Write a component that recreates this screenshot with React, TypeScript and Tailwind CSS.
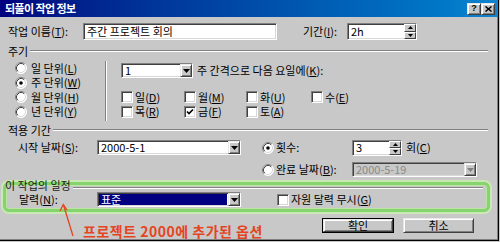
import React from "react";

const sunken =
  "border border-t-[#808080] border-l-[#808080] border-b-white border-r-white shadow-[inset_1px_1px_0_#404040,inset_-1px_-1px_0_#d8d8d8]";
const raised =
  "bg-[#c8c8c8] border border-t-[#e8e8e8] border-l-[#e8e8e8] border-b-[#404040] border-r-[#404040] shadow-[inset_1px_1px_0_#ffffff,inset_-1px_-1px_0_#808080]";
const raisedThin =
  "bg-[#c8c8c8] border border-t-white border-l-white border-b-[#404040] border-r-[#404040]";

function Arrow({ color = "#000" }: { color?: string }) {
  return (
    <svg width="7" height="4" viewBox="0 0 7 4">
      <path d="M0 0H7L3.5 4Z" fill={color} />
    </svg>
  );
}

function Tri({ up = false }: { up?: boolean }) {
  return (
    <svg width="5" height="3" viewBox="0 0 5 3">
      <path d={up ? "M0 3H5L2.5 0Z" : "M0 0H5L2.5 3Z"} fill="#000" />
    </svg>
  );
}

function Combo({
  value,
  className = "",
  selected = false,
  disabled = false,
}: {
  value: string;
  className?: string;
  selected?: boolean;
  disabled?: boolean;
}) {
  return (
    <div className={`h-[15px] flex ${sunken} ${disabled ? "bg-[#c8c8c8]" : "bg-white"} ${className}`}>
      <div className="flex-1 flex items-center p-[1px] min-w-0">
        {selected ? (
          <div className="w-full h-full bg-[#000080] text-white flex items-center pl-[2px]">{value}</div>
        ) : (
          <span className={`pl-[2px] ${disabled ? "text-[#8a8a8a]" : ""}`}>{value}</span>
        )}
      </div>
      <div className={`w-[12px] h-full flex items-center justify-center ${raised}`}>
        <Arrow color={disabled ? "#808080" : "#000"} />
      </div>
    </div>
  );
}

function Spin({ value, className = "" }: { value: string; className?: string }) {
  return (
    <div className={`flex bg-white ${sunken} ${className}`}>
      <div className="flex-1 flex items-center pl-[3px]">{value}</div>
      <div className="w-[12px] flex flex-col">
        <div className={`flex-1 flex items-center justify-center ${raisedThin}`}>
          <Tri up />
        </div>
        <div className={`flex-1 flex items-center justify-center ${raisedThin}`}>
          <Tri />
        </div>
      </div>
    </div>
  );
}

function Radio({ checked = false }: { checked?: boolean }) {
  return (
    <svg width="12" height="12" viewBox="0 0 12 12" className="shrink-0">
      <circle cx="6" cy="6" r="5.5" fill="#fff" />
      <path d="M2.11 9.89A5.5 5.5 0 0 1 9.89 2.11" fill="none" stroke="#808080" strokeWidth="1" />
      <path d="M9.89 2.11A5.5 5.5 0 0 1 2.11 9.89" fill="none" stroke="#ffffff" strokeWidth="1" />
      <path d="M2.82 9.18A4.5 4.5 0 0 1 9.18 2.82" fill="none" stroke="#404040" strokeWidth="1" />
      <path d="M9.18 2.82A4.5 4.5 0 0 1 2.82 9.18" fill="none" stroke="#d8d8d8" strokeWidth="1" />
      {checked && <circle cx="6" cy="6" r="1.8" fill="#000" />}
    </svg>
  );
}

function Check({ checked = false }: { checked?: boolean }) {
  return (
    <div className={`w-[12px] h-[12px] bg-white shrink-0 flex items-center justify-center ${sunken}`}>
      {checked && (
        <svg width="8" height="8" viewBox="0 0 8 8">
          <polyline points="1,3.5 3,5.5 7,1.5" fill="none" stroke="#000" strokeWidth="1.7" />
        </svg>
      )}
    </div>
  );
}

function Etched({ className = "" }: { className?: string }) {
  return <div className={`h-[2px] border-t border-t-[#808080] border-b border-b-white ${className}`} />;
}

function GroupHeader({ label }: { label: string }) {
  return (
    <div className="h-[12px] flex items-center pl-[8px] pr-[10px]">
      <span className="leading-[12px]">{label}</span>
      <Etched className="flex-1 ml-[2px]" />
    </div>
  );
}

function CheckItem({ label, m, checked = false, w }: { label: string; m: string; checked?: boolean; w: string }) {
  return (
    <div className={`flex items-center ${w}`}>
      <Check checked={checked} />
      <span className="ml-[2px]">
        {label}(<u>{m}</u>)
      </span>
    </div>
  );
}

export default function App() {
  return (
    <div className="w-[500px] h-[242px] bg-[#c8c8c8] overflow-hidden font-['Noto_Sans_CJK_KR',sans-serif] text-[11px] leading-[13px] text-black relative">
      <div className="w-[499px] h-[241px] border-r border-b border-r-[#000] border-b-[#000] shadow-[inset_-1px_-1px_0_#808080] flex flex-col">
        {/* Title bar */}
        <div className="h-[17px] flex items-center bg-linear-to-r from-[#000080] to-[#1084d0] pl-[5px] pr-[3px]">
          <span className="text-white font-bold text-[11px] tracking-[-0.6px]">되풀이 작업 정보</span>
          <div className="ml-auto flex">
            <div className={`w-[14px] h-[12px] flex items-center justify-center ${raised}`}>
              <span className="text-[9px] font-bold leading-none font-['Liberation_Sans',sans-serif]">?</span>
            </div>
            <div className={`w-[14px] h-[12px] flex items-center justify-center ${raised}`}>
              <svg width="7" height="6" viewBox="0 0 7 6">
                <path d="M0.5 0.5L6.5 5.5M6.5 0.5L0.5 5.5" stroke="#000" strokeWidth="1.5" />
              </svg>
            </div>
          </div>
        </div>

        {/* Row 1 */}
        <div className="mt-[6px] h-[17px] flex items-center">
          <span className="w-[83px] pl-[8px]">
            작업 이름(<u>T</u>):
          </span>
          <div className={`w-[194px] h-[17px] bg-white flex items-center pl-[3px] ${sunken}`}>주간 프로젝트 회의</div>
          <span className="ml-[26px] w-[44px]">
            기간(<u>I</u>):
          </span>
          <Spin value="2h" className="w-[70px] h-[17px]" />
        </div>

        {/* 주기 */}
        <div className="mt-[5px]">
          <GroupHeader label="주기" />
        </div>
        <div className="mt-[4px] h-[59px] flex">
          <div className="w-[105px] flex flex-col">
            {[
              ["일 단위", "L", false],
              ["주 단위", "W", true],
              ["월 단위", "H", false],
              ["년 단위", "Y", false],
            ].map(([t, m, c]) => (
              <div key={t as string} className="h-[14.5px] flex items-center pl-[15px]">
                <Radio checked={c as boolean} />
                <span className="ml-[4px]">
                  {t}(<u>{m}</u>)
                </span>
              </div>
            ))}
          </div>
          <div className="w-[2px] h-[60px] border-l border-l-[#808080] border-r border-r-white" />
          <div className="pl-[14px] flex flex-col">
            <div className="mt-[2px] h-[15px] flex items-center">
              <Combo value="1" className="w-[72px]" />
              <span className="ml-[4px]">
                주 간격으로 다음 요일에(<u>K</u>):
              </span>
            </div>
            <div className="mt-[12px] h-[14.5px] flex items-center">
              <CheckItem label="일" m="D" w="w-[63px]" />
              <CheckItem label="월" m="M" w="w-[62px]" />
              <CheckItem label="화" m="U" w="w-[65px]" />
              <CheckItem label="수" m="E" w="w-[60px]" />
            </div>
            <div className="h-[14.5px] flex items-center">
              <CheckItem label="목" m="R" w="w-[63px]" />
              <CheckItem label="금" m="F" w="w-[62px]" checked />
              <CheckItem label="토" m="A" w="w-[65px]" />
            </div>
          </div>
        </div>

        {/* 적용 기간 */}
        <div className="mt-[4px]">
          <GroupHeader label="적용 기간" />
        </div>
        <div className="mt-[4px] h-[15px] flex items-center">
          <span className="w-[97px] pl-[18px]">
            시작 날짜(<u>S</u>):
          </span>
          <Combo value="2000-5-1" className="w-[144px]" />
          <div className="ml-[21px] w-[90px] flex items-center">
            <Radio checked />
            <span className="ml-[2px]">횟수:</span>
          </div>
          <Spin value="3" className="w-[50px] h-[16px]" />
          <span className="ml-[4px]">
            회(<u>C</u>)
          </span>
        </div>
        <div className="mt-[7px] h-[15px] flex items-center pl-[262px]">
          <div className="w-[90px] flex items-center">
            <Radio />
            <span className="ml-[2px]">
              완료 날짜(<u>B</u>):
            </span>
          </div>
          <Combo value="2000-5-19" className="w-[125px]" disabled />
        </div>

        {/* 이 작업의 일정 (highlighted) */}
        <div className="mt-[5px] ml-[3px] w-[487px] h-[30px] border-[3px] border-[#86d46e] rounded-[6px] shadow-[0_0_0_2px_#c9e9b4,inset_0_0_0_1px_#b9e4a2] flex flex-col">
          <div className="h-0 flex items-center">
            <span className="leading-[11px] -ml-[1px] text-[#202020]">이 작업의 일정</span>
            <Etched className="flex-1 ml-[2px] mr-[4px] mt-[5px]" />
          </div>
          <div className="mt-[7px] h-[15px] flex items-center">
            <span className="w-[91px] pl-[13px]">
              달력(<u>N</u>):
            </span>
            <Combo value="표준" className="w-[144px]" selected />
            <div className="ml-[36px] flex items-center">
              <Check />
              <span className="ml-[2px]">
                자원 달력 무시(<u>G</u>)
              </span>
            </div>
          </div>
        </div>

        {/* Bottom row */}
        <div className="mt-[6px] h-[22px] flex">
          <span className="self-end pl-[83px] text-[14px] leading-[18px] font-bold text-[#e4441f] tracking-[0.5px]">
            프로젝트 2000에 추가된 옵션
          </span>
          <div className="ml-auto mr-[24px] flex gap-[9px] self-start">
            <div className="w-[72px] h-[15px] border border-black">
              <div className={`w-full h-full flex items-center justify-center ${raised}`}>확인</div>
            </div>
            <div className={`w-[71px] h-[15px] flex items-center justify-center ${raised}`}>취소</div>
          </div>
        </div>
      </div>

      {/* Red annotation arrow */}
      <svg className="absolute left-[55px] top-[198px]" width="25" height="42" viewBox="0 0 25 42">
        <path d="M18 38L8.5 7" stroke="#e4441f" strokeWidth="1.3" fill="none" />
        <path d="M5 13L8.3 6.5L12 12" stroke="#e4441f" strokeWidth="1.3" fill="none" />
      </svg>
    </div>
  );
}
